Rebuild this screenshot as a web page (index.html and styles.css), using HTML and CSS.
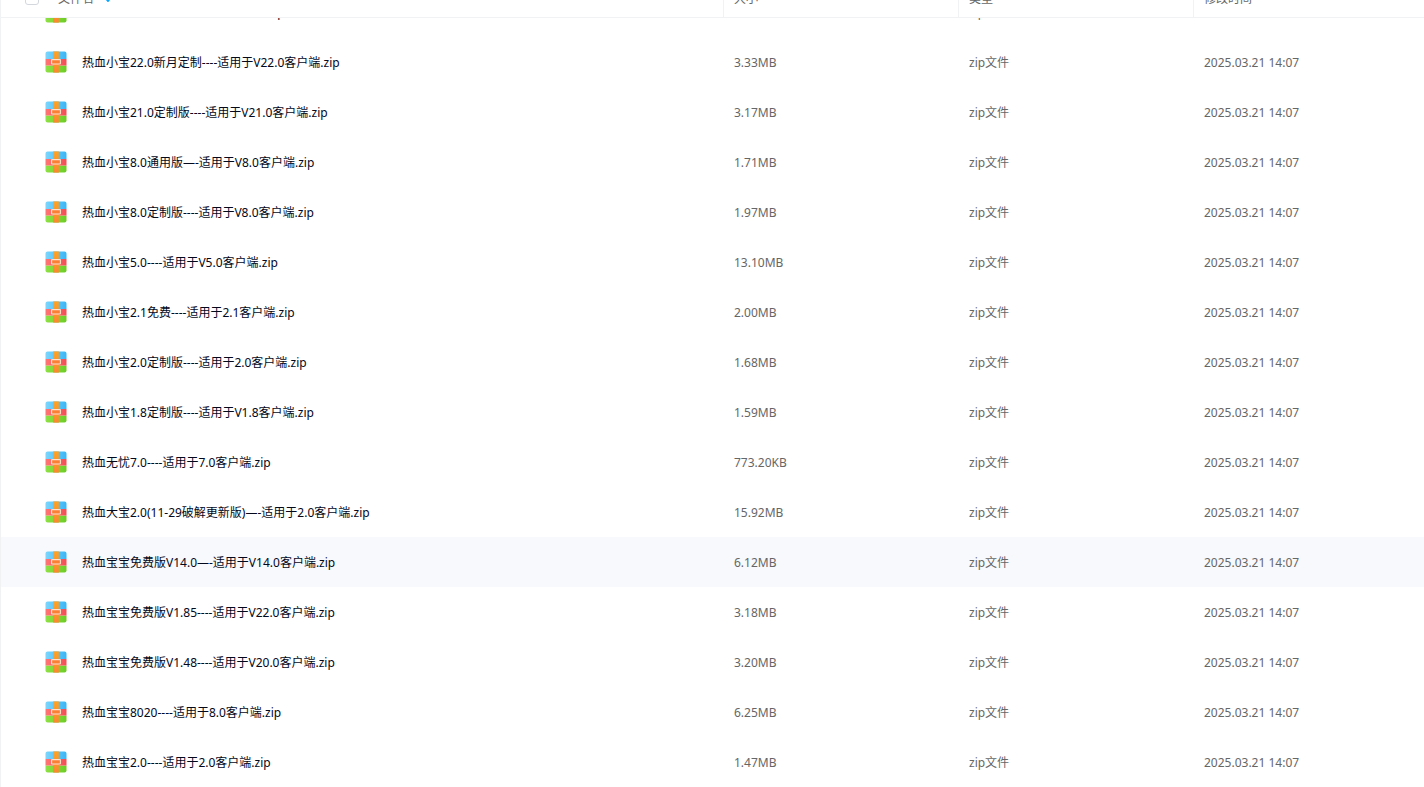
FILE: index.html
```html
<!DOCTYPE html>
<html lang="zh-CN">
<head>
    <meta charset="UTF-8">
    <meta name="viewport" content="width=device-width, initial-scale=1.0">
    <title>文件列表</title>
    <link rel="stylesheet" href="styles.css">
</head>
<body>
    <svg class="sprite" aria-hidden="true">
        <defs>
            <linearGradient id="blue" x1="0" y1="0" x2="1" y2="0">
                <stop offset="0" stop-color="#7cd6fd"/>
                <stop offset="1" stop-color="#3bb6f4"/>
            </linearGradient>
            <linearGradient id="red" x1="0" y1="0" x2="1" y2="0">
                <stop offset="0" stop-color="#ff7474"/>
                <stop offset="1" stop-color="#f24f55"/>
            </linearGradient>
            <linearGradient id="green" x1="0" y1="0" x2="1" y2="0">
                <stop offset="0" stop-color="#8fe045"/>
                <stop offset="1" stop-color="#6fcb26"/>
            </linearGradient>
            <linearGradient id="orange" x1="0" y1="0" x2="0" y2="1">
                <stop offset="0" stop-color="#fca326"/>
                <stop offset="1" stop-color="#fb8630"/>
            </linearGradient>
        </defs>
        <symbol id="zip" viewBox="0 0 22 22">
            <path fill="url(#blue)" d="M2.500 .4h17a2 2 0 0 1 2 2V8H.5V2.400a2 2 0 0 1 2-2z"/>
            <path fill="url(#red)" d="M.5 8h21v6.700H.5z"/>
            <path fill="url(#green)" d="M.5 14.700h21v4.900a2 2 0 0 1-2 2h-17a2 2 0 0 1-2-2z"/>
            <path fill="url(#orange)" d="M8.200 .4h5.600v21.200H8.200z"/>
            <rect x="6.600" y="8.600" width="8.800" height="4.400" rx=".4" fill="#fb7f35" stroke="#ffe3cf" stroke-width="1.100"/>
        </symbol>
    </svg>

    <div class="file-list" id="fileList">
        <table class="file-table">
            <colgroup>
                <col>
                <col class="col-size">
                <col class="col-type">
                <col class="col-time">
            </colgroup>
            <thead>
                <tr>
                    <th>
                        <div class="head-name">
                            <input type="checkbox" class="check-all" aria-label="全选">
                            <span class="label">文件名</span>
                            <svg class="sort" viewBox="0 0 8 8"><path fill="#06a7ff" d="M3 0h2v3.500h3L4.600 7.700a.8.8 0 0 1-1.200 0L0 3.500h3z"/></svg>
                        </div>
                    </th>
                    <th>大小</th>
                    <th>类型</th>
                    <th>修改时间</th>
                </tr>
            </thead>
            <tbody id="rows"></tbody>
        </table>
    </div>

    <script>
        const files = [
            ["热血小宝23.0----适用于V9.0客户端.zip", "3.35MB"],
            ["热血小宝22.0新月定制----适用于V22.0客户端.zip", "3.33MB"],
            ["热血小宝21.0定制版----适用于V21.0客户端.zip", "3.17MB"],
            ["热血小宝8.0通用版—-适用于V8.0客户端.zip", "1.71MB"],
            ["热血小宝8.0定制版----适用于V8.0客户端.zip", "1.97MB"],
            ["热血小宝5.0----适用于V5.0客户端.zip", "13.10MB"],
            ["热血小宝2.1免费----适用于2.1客户端.zip", "2.00MB"],
            ["热血小宝2.0定制版----适用于2.0客户端.zip", "1.68MB"],
            ["热血小宝1.8定制版----适用于V1.8客户端.zip", "1.59MB"],
            ["热血无忧7.0----适用于7.0客户端.zip", "773.20KB"],
            ["热血大宝2.0(11-29破解更新版)—-适用于2.0客户端.zip", "15.92MB"],
            ["热血宝宝免费版V14.0—-适用于V14.0客户端.zip", "6.12MB", true],
            ["热血宝宝免费版V1.85----适用于V22.0客户端.zip", "3.18MB"],
            ["热血宝宝免费版V1.48----适用于V20.0客户端.zip", "3.20MB"],
            ["热血宝宝8020----适用于8.0客户端.zip", "6.25MB"],
            ["热血宝宝2.0----适用于2.0客户端.zip", "1.47MB"]
        ];

        document.getElementById("rows").innerHTML = files.map(([name, size, active]) => `
            <tr${active ? ' class="active"' : ""}>
                <td>
                    <div class="file-name">
                        <svg class="file-icon"><use href="#zip"/></svg>
                        <a href="#" class="label">${name}</a>
                    </div>
                </td>
                <td>${size}</td>
                <td>zip文件</td>
                <td>2025.03.21 14:07</td>
            </tr>`).join("");

        // start at the end of the list
        const list = document.getElementById("fileList");
        list.scrollTop = list.scrollHeight;
    </script>
</body>
</html>
```
FILE: styles.css
```css
body {
    margin: 0;
    overflow: hidden;
    font-family: "Noto Sans", "Noto Sans CJK SC", sans-serif;
    font-size: 12px;
    line-height: 18px;
    color: #666;
    background-color: #fff;
}
.sprite {
    position: absolute;
    width: 0;
    height: 0;
}
/* the top of the header row is scrolled out of the window */
.file-list {
    height: calc(100vh + 22px);
    margin-top: -22px;
    box-sizing: border-box;
    border-left: 1px solid #f1f2f4;
    overflow-y: auto;
    scrollbar-width: none;
}
.file-table {
    width: 100%;
    table-layout: fixed;
    border-collapse: separate;
    border-spacing: 0;
}
.col-size, .col-type {
    width: 235px;
}
.col-time {
    width: 231px;
}
th, td {
    box-sizing: border-box;
    padding: 2px 10px 0;
    text-align: left;
    font-weight: normal;
    white-space: nowrap;
}
th {
    position: sticky;
    top: 0;
    z-index: 1;
    height: 40px;
    background-color: #fff;
    border-bottom: 1px solid #f1f2f4;
}
th + th {
    border-left: 1px solid #f1f2f4;
}
td {
    height: 50px;
}
td + td {
    padding-left: 11px;
}
th:first-child {
    padding: 0 0 0 24px;
}
td:first-child {
    padding: 0 0 0 44px;
}
.label {
    padding-top: 2px;
}
.active td {
    background-color: #f7f9fc;
}
.head-name {
    display: flex;
    align-items: center;
}
.check-all {
    appearance: none;
    width: 14px;
    height: 14px;
    margin: 0 19px 0 0;
    border: 1px solid #d4d7de;
    border-radius: 3px;
}
.sort {
    width: 8px;
    height: 8px;
    margin-left: 10px;
}
.file-name {
    display: flex;
    align-items: center;
    gap: 15px;
}
.file-icon {
    width: 22px;
    height: 22px;
}
.file-name a {
    color: #03081a;
    text-decoration: none;
}
```
